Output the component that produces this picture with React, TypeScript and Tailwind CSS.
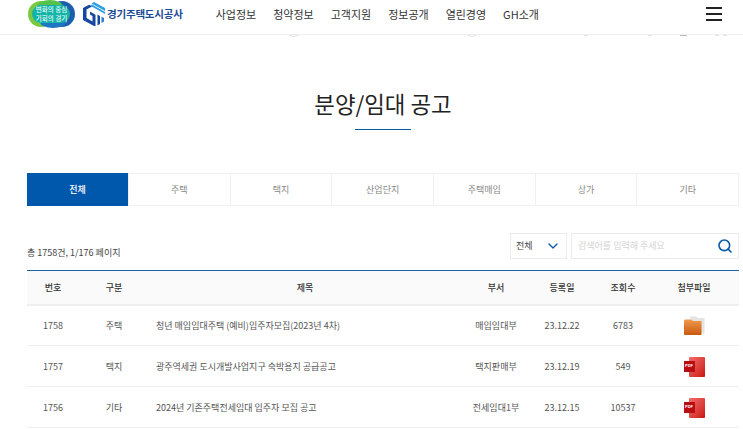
import { ChevronDown, Search } from 'lucide-react'

const nav = ['사업정보', '청약정보', '고객지원', '정보공개', '열린경영', 'GH소개']
const tabs = ['전체', '주택', '택지', '산업단지', '주택매입', '상가', '기타']
const cols = 'grid grid-cols-[52px_70px_312px_70px_62px_60px_82px_4px] items-center text-center'

const rows = [
  { no: '1758', type: '주택', title: '청년 매입임대주택 (예비)입주자모집(2023년 4차)', dept: '매입임대부', date: '23.12.22', views: '6783', file: 'folder' },
  { no: '1757', type: '택지', title: '광주역세권 도시개발사업지구 숙박용지 공급공고', dept: '택지판매부', date: '23.12.19', views: '549', file: 'pdf' },
  { no: '1756', type: '기타', title: '2024년 기존주택전세임대 입주자 모집 공고', dept: '전세임대1부', date: '23.12.15', views: '10537', file: 'pdf' },
]

const CampaignLogo = () => (
  <div className="relative h-[28px] w-[47px]">
    <svg viewBox="0 0 47 28" className="absolute inset-0 h-full w-full">
      <circle cx="13" cy="14" r="13" fill="#7ac943" />
      <circle cx="34" cy="14" r="13" fill="#1b5fae" />
      <ellipse cx="22" cy="7" rx="13" ry="7" fill="#55c24a" />
      <ellipse cx="25" cy="22" rx="13" ry="6" fill="#1d78c1" />
      <rect x="4" y="5" width="38" height="18" rx="9" fill="#14b3a8" />
    </svg>
    <div className="absolute inset-0 flex flex-col items-center justify-center text-[6.5px] leading-[9px] font-medium text-[#e6fbf6]">
      <span>변화의 중심</span>
      <span>기회의 경기</span>
    </div>
  </div>
)

const GhMark = () => (
  <svg viewBox="0 0 22 24" className="h-[24px] w-[22px]">
    <path d="M11 0 L22 6 V9 L8.5 1.5 Z" fill="#2f9fe0" />
    <path d="M7 3.5 L9 2.5 L22 10 V12 Z" fill="#2f9fe0" />
    <path d="M0 6 L6 2.7 L9 4.4 L3.5 7.6 V16 L9.5 19.5 V14 L7 12.6 V9.6 L12.5 12.7 V24 H11 L0 18 Z" fill="#17479e" />
    <path d="M14.5 12.5 L17 14 V22 L14.5 23.4 Z" fill="#17479e" />
    <path d="M18.5 14.5 L21 16 V19.5 L18.5 21 Z" fill="#2a7fd0" />
  </svg>
)

const FolderIcon = () => (
  <svg viewBox="0 0 21 20" className="h-[20px] w-[21px]">
    <defs>
      <linearGradient id="folderFill" x1="0" y1="0" x2="0" y2="1">
        <stop offset="0" stopColor="#f09a4c" />
        <stop offset="1" stopColor="#c9590f" />
      </linearGradient>
    </defs>
    <path d="M6 0.5 H12 L14 2 H20.5 V17.5 H17 V5 H6 Z" fill="#e6e4e2" />
    <path d="M0 4.5 L1 3.5 H7 L9 5 H17.5 V18.5 L17 19 H1 L0 18.5 Z" fill="url(#folderFill)" />
  </svg>
)

const PdfIcon = () => (
  <div className="relative h-[20px] w-[21px]">
    <div className="absolute right-0 top-0 h-[20px] w-[16px] rounded-[1px] bg-gradient-to-br from-[#f26a6a] to-[#cb0a0a]" />
    <div className="absolute left-0 top-[4px] flex h-[11px] w-[11px] items-center justify-center bg-[#b90d12] font-['Liberation_Sans',sans-serif] text-[4px] font-bold text-white">
      PDF
    </div>
  </div>
)

export default function App() {
  return (
    <div className="relative h-[429px] overflow-hidden bg-white font-['Noto_Sans_CJK_KR','Noto_Sans',sans-serif]">
      <header className="flex h-[35px] items-center border-b border-[#efefef] pb-[6px]">
        <div className="ml-[28px] flex items-center gap-[8px]">
          <CampaignLogo />
          <div className="flex items-center gap-[2px]">
            <GhMark />
            <span className="text-[10.5px] font-bold tracking-[-0.2px] text-[#1c4a96]">경기주택도시공사</span>
          </div>
        </div>
        <nav className="ml-[33px] flex gap-[17px] text-[11px] text-[#333]">
          {nav.map((item) => (
            <a key={item}>{item}</a>
          ))}
        </nav>
        <div className="ml-auto mr-[21px] flex w-[16px] flex-col gap-[4px]">
          <span className="h-[2px] bg-[#222]" />
          <span className="h-[2px] bg-[#222]" />
          <span className="h-[2px] bg-[#222]" />
        </div>
      </header>

      {/* bits of the hidden sub menu icons peeking out under the header */}
      <svg className="absolute left-0 top-[35px] h-[2px] w-full" fill="none" stroke="#e2e2e2">
        <path d="M289 0 Q294 3 299 0" />
        <path d="M467 0 Q472 3 477 0" />
        <path d="M584 0.5 H588" />
        <path d="M648 0.5 H652" />
        <path d="M680 0.5 H687" stroke="#b5bcc2" />
        <path d="M715 0.5 H719 M723 0.5 H727" />
      </svg>

      <main className="ml-[27px] mr-[4px]">
        <div className="flex flex-col items-center pt-[50px]">
          <h1 className="text-[22.4px] leading-[36px] font-normal text-[#222]">분양/임대 공고</h1>
          <div className="mt-[8px] h-px w-[56px] bg-[#0b5aa8]" />
        </div>

        <div className="mt-[43px] grid h-[33px] grid-cols-[101px_repeat(6,1fr)] border-y border-r border-[#f1f1f1] text-[9px]">
          {tabs.map((tab, i) => (
            <div
              key={tab}
              className={
                i === 0
                  ? '-my-px flex items-center justify-center bg-[#0058ac] font-medium text-white'
                  : 'flex items-center justify-center border-l border-[#f1f1f1] text-[#888]'
              }
            >
              {tab}
            </div>
          ))}
        </div>

        <div className="mt-[27px] flex h-[26px] items-center justify-between">
          <span className="pt-[13px] text-[9px] text-[#444]">총 1758건, 1/176 페이지</span>
          <div className="flex gap-[4px]">
            <div className="flex h-[26px] w-[57px] items-center justify-between border border-[#ececec] pl-[5px] pr-[5px] text-[9px] text-[#444]">
              전체
              <ChevronDown size={16} className="text-[#0b5aa8]" />
            </div>
            <div className="flex h-[26px] w-[168px] items-center justify-between border border-[#ececec] pl-[6px] pr-[5px] text-[9px] text-[#d4d4d4]">
              검색어를 입력해 주세요
              <Search size={16} strokeWidth={2.4} className="text-[#0b5aa8]" />
            </div>
          </div>
        </div>

        <div className="mt-[11px] border-t border-[#1a62ac]">
          <div className={`${cols} h-[35px] border-b-2 border-[#efefef] bg-[#fafafa] text-[9px] font-medium text-[#333]`}>
            <span>번호</span>
            <span>구분</span>
            <span>제목</span>
            <span>부서</span>
            <span>등록일</span>
            <span>조회수</span>
            <span>첨부파일</span>
          </div>
          {rows.map((row, i) => (
            <div
              key={row.no}
              className={`${cols} ${i === 0 ? 'h-[40px]' : 'h-[41px]'} border-b border-[#efefef] pt-px text-[9px] text-[#555]`}
            >
              <span>{row.no}</span>
              <span>{row.type}</span>
              <span className="truncate pl-[7px] text-left">{row.title}</span>
              <span>{row.dept}</span>
              <span>{row.date}</span>
              <span>{row.views}</span>
              <span className="flex justify-center">{row.file === 'pdf' ? <PdfIcon /> : <FolderIcon />}</span>
            </div>
          ))}
        </div>
      </main>
    </div>
  )
}
